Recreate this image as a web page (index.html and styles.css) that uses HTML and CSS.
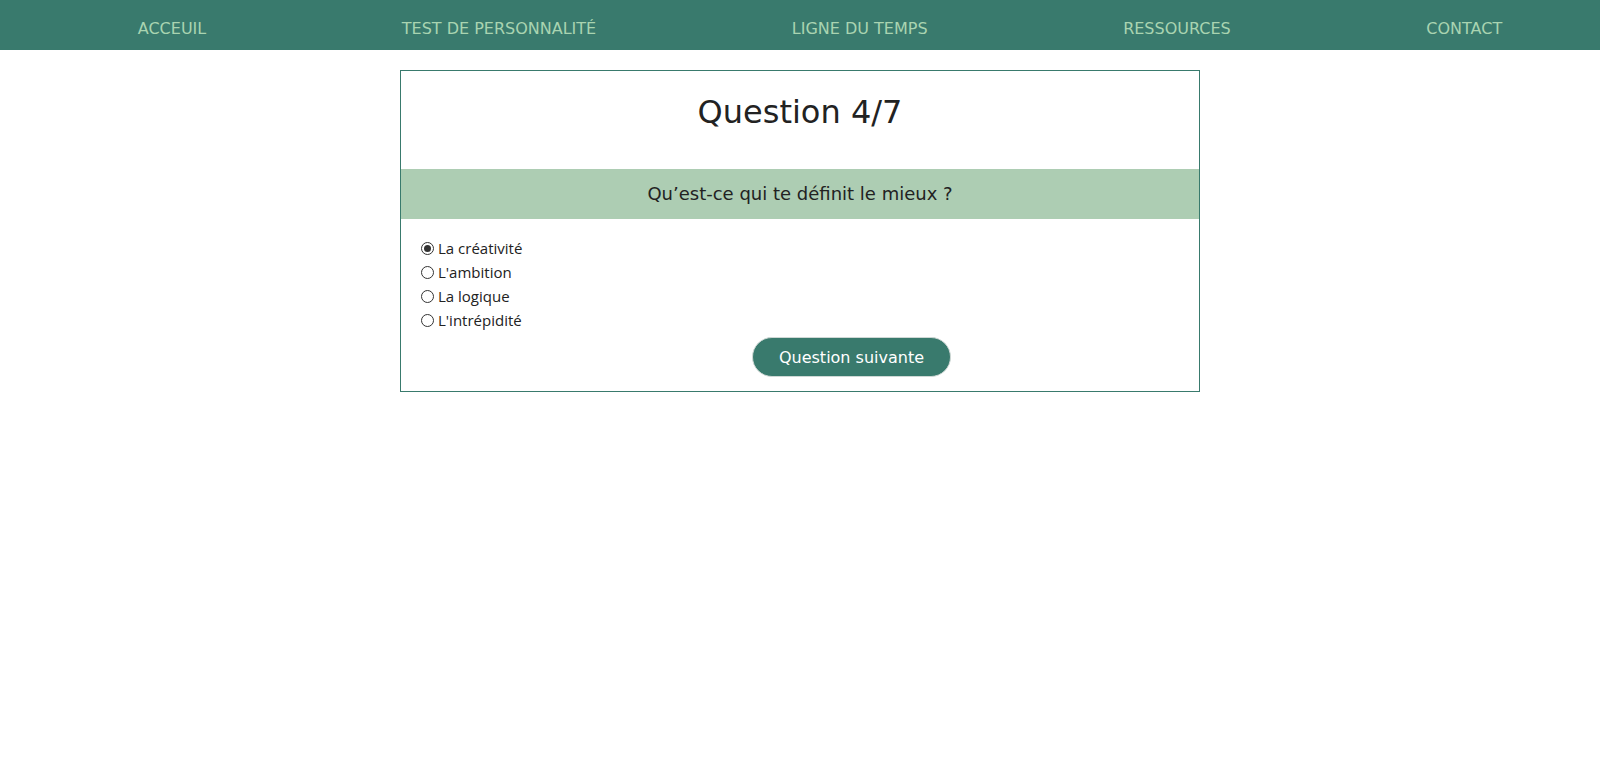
FILE: index.html
```html
<!DOCTYPE html>
<html lang="fr">
<head>
<meta charset="utf-8">
<title>Question 4/7</title>
<link rel="stylesheet" href="styles.css">
</head>
<body>
<nav class="topnav">
  <ul class="menu">
    <li><a href="#">ACCEUIL</a></li>
    <li><a href="#">TEST DE PERSONNALITÉ</a></li>
    <li><a href="#">LIGNE DU TEMPS</a></li>
    <li><a href="#">RESSOURCES</a></li>
    <li><a href="#">CONTACT</a></li>
  </ul>
</nav>
<main class="quiz">
  <h1 class="quiz-title">Question 4/7</h1>
  <p class="quiz-question">Qu’est-ce qui te définit le mieux ?</p>
  <form class="quiz-form">
    <label class="option"><input type="radio" name="q4" checked><span>La créativité</span></label>
    <label class="option"><input type="radio" name="q4"><span>L'ambition</span></label>
    <label class="option"><input type="radio" name="q4"><span>La logique</span></label>
    <label class="option"><input type="radio" name="q4"><span>L'intrépidité</span></label>
    <div class="actions"><button type="button" class="next-btn">Question suivante</button></div>
  </form>
</main>
</body>
</html>
```
FILE: styles.css
```css
html, body {
  margin: 0;
  padding: 0;
  background: #ffffff;
}
body {
  font-family: "DejaVu Sans", sans-serif;
  color: #222222;
}
.topnav {
  background: #397a6d;
  height: 50px;
}
.menu {
  list-style: none;
  margin: 0;
  padding: 6px 0 0 40px;
  height: 50px;
  box-sizing: border-box;
  display: flex;
  justify-content: space-around;
  align-items: center;
}
.menu a {
  color: #a9d4b1;
  text-decoration: none;
  font-size: 16px;
}
.quiz {
  width: 800px;
  box-sizing: border-box;
  margin: 20px auto 0;
  border: 1px solid #397a6d;
}
.quiz-title {
  margin: 0;
  padding: 21px 0 37px;
  font-size: 32px;
  line-height: 40px;
  font-weight: normal;
  text-align: center;
  color: #222222;
}
.quiz-question {
  margin: 0;
  background: #adcdb3;
  font-size: 18px;
  line-height: 21px;
  padding: 14px 0 15px;
  text-align: center;
  color: #222222;
}
.quiz-form {
  padding: 17px 20px 14px;
  display: flex;
  flex-direction: column;
}
.option {
  display: flex;
  align-items: center;
  gap: 4px;
  height: 24px;
  font-family: "Open Sans", "Noto Sans", sans-serif;
  font-size: 15px;
  color: #222222;
}
.option input {
  appearance: none;
  -webkit-appearance: none;
  margin: 0;
  width: 13px;
  height: 13px;
  border: 1px solid #333333;
  border-radius: 50%;
  box-sizing: border-box;
  background: #ffffff;
  position: relative;
}
.option input:checked::after {
  content: "";
  position: absolute;
  left: 2px;
  top: 2px;
  width: 7px;
  height: 7px;
  border-radius: 50%;
  background: #333333;
}
.actions {
  display: flex;
  margin-top: 5px;
}
.next-btn {
  margin-left: 331px;
  width: 199px;
  height: 40px;
  border-radius: 20px;
  border: 1px solid #cfd8d5;
  background: #397a6d;
  color: #ffffff;
  font-family: "DejaVu Sans", sans-serif;
  font-size: 16px;
  cursor: pointer;
}
```
